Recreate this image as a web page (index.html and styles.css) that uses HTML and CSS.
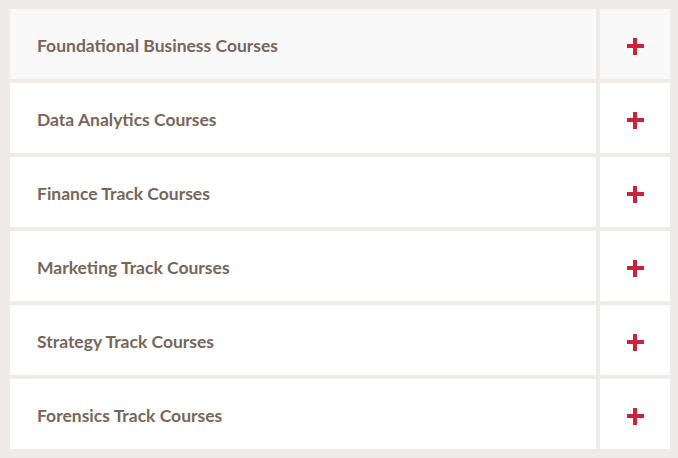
FILE: index.html
```html
<!DOCTYPE html>
<html>
<head>
<meta charset="utf-8">
<link rel="stylesheet" href="styles.css">
</head>
<body>
<div class="accordion">
  <div class="row row-active"><div class="title">Foundational Business Courses</div><div class="toggle"><span class="plus"></span></div></div>
  <div class="row"><div class="title">Data Analytics Courses</div><div class="toggle"><span class="plus"></span></div></div>
  <div class="row"><div class="title">Finance Track Courses</div><div class="toggle"><span class="plus"></span></div></div>
  <div class="row"><div class="title">Marketing Track Courses</div><div class="toggle"><span class="plus"></span></div></div>
  <div class="row"><div class="title">Strategy Track Courses</div><div class="toggle"><span class="plus"></span></div></div>
  <div class="row"><div class="title">Forensics Track Courses</div><div class="toggle"><span class="plus"></span></div></div>
</div>
</body>
</html>
```
FILE: styles.css
```css
html, body { margin: 0; padding: 0; }
body {
  background: #efebe8;
  font-family: Lato, "Open Sans", sans-serif;
  width: 678px;
  height: 458px;
  overflow: hidden;
}
.accordion {
  padding: 9px 8px 9px 10px;
  display: flex;
  flex-direction: column;
  gap: 4px;
}
.row {
  display: flex;
  gap: 4px;
  height: 70px;
}
.title {
  flex: 1;
  background: #fff;
  display: flex;
  align-items: center;
  padding: 3px 0 0 27px;
  font-weight: 700;
  font-size: 17.5px;
  color: #776659;
}
.toggle {
  width: 70px;
  background: #fff;
  display: flex;
  align-items: center;
  justify-content: center;
  padding-top: 4px;
  box-sizing: border-box;
}
.row-active .title, .row-active .toggle { background: #f9f9f9; }
.plus {
  position: relative;
  width: 17px;
  height: 17px;
}
.plus::before, .plus::after {
  content: "";
  position: absolute;
  background: #c9243b;
}
.plus::before { left: 0; right: 0; top: 6px; height: 4px; }
.plus::after { top: 0; bottom: 0; left: 6px; width: 4px; }
```
